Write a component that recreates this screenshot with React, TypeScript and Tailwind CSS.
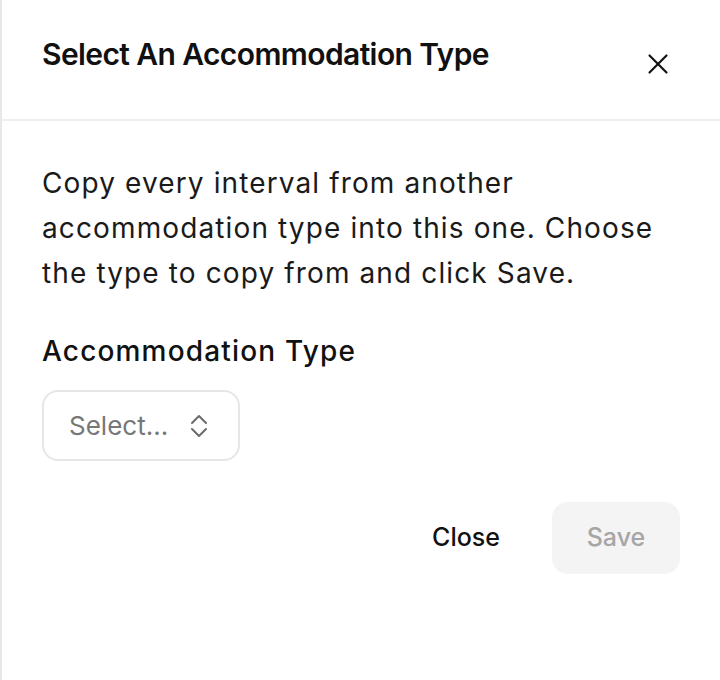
import { X } from "lucide-react";

function UpDown() {
  return (
    <svg width="18" height="24" viewBox="0 0 18 24" fill="none" stroke="#6b6b6b" strokeWidth="2" strokeLinecap="round" strokeLinejoin="round">
      <path d="M2 9l7-7 7 7" />
      <path d="M2 15l7 7 7-7" />
    </svg>
  );
}

export default function App() {
  return (
    <div
      className="w-[720px] h-[680px] bg-white border-l-2 border-[#e8e8e8] text-[#111]"
      style={{ fontFamily: "Inter, 'Noto Sans', sans-serif" }}
    >
      <div className="flex items-start justify-between h-[121px] pl-[40px] pr-[45px] pt-[36px] border-b-2 border-[#eeeeee]">
        <h2 className="text-[30px] font-semibold tracking-[-0.02em] leading-[36px]">
          Select An Accommodation Type
        </h2>
        <button className="mt-[11px]">
          <X className="w-[34px] h-[34px]" strokeWidth={1.5} />
        </button>
      </div>
      <div className="pl-[40px] pr-[40px] pt-[40px]">
        <p className="text-[28px] leading-[45px] tracking-[0.04em] text-[#1a1a1a]">
          Copy every interval from another accommodation type into this one. Choose the type to copy from and click Save.
        </p>
        <label className="block mt-[33px] text-[28px] font-medium leading-[45px] tracking-[0.042em]">
          Accommodation Type
        </label>
        <button className="mt-[16px] flex items-center gap-[22px] w-[198px] h-[71px] pl-[25px] rounded-[16px] border-2 border-[#e6e6e6] text-[26px] text-[#777]">
          <span>Select...</span>
          <UpDown />
        </button>
        <div className="flex justify-end items-center gap-[52px] mt-[41px]">
          <button className="text-[25px] font-medium">Close</button>
          <button className="w-[128px] h-[72px] rounded-[16px] bg-[#f4f4f4] text-[25px] font-medium text-[#a6a6a6]">
            Save
          </button>
        </div>
      </div>
    </div>
  );
}
